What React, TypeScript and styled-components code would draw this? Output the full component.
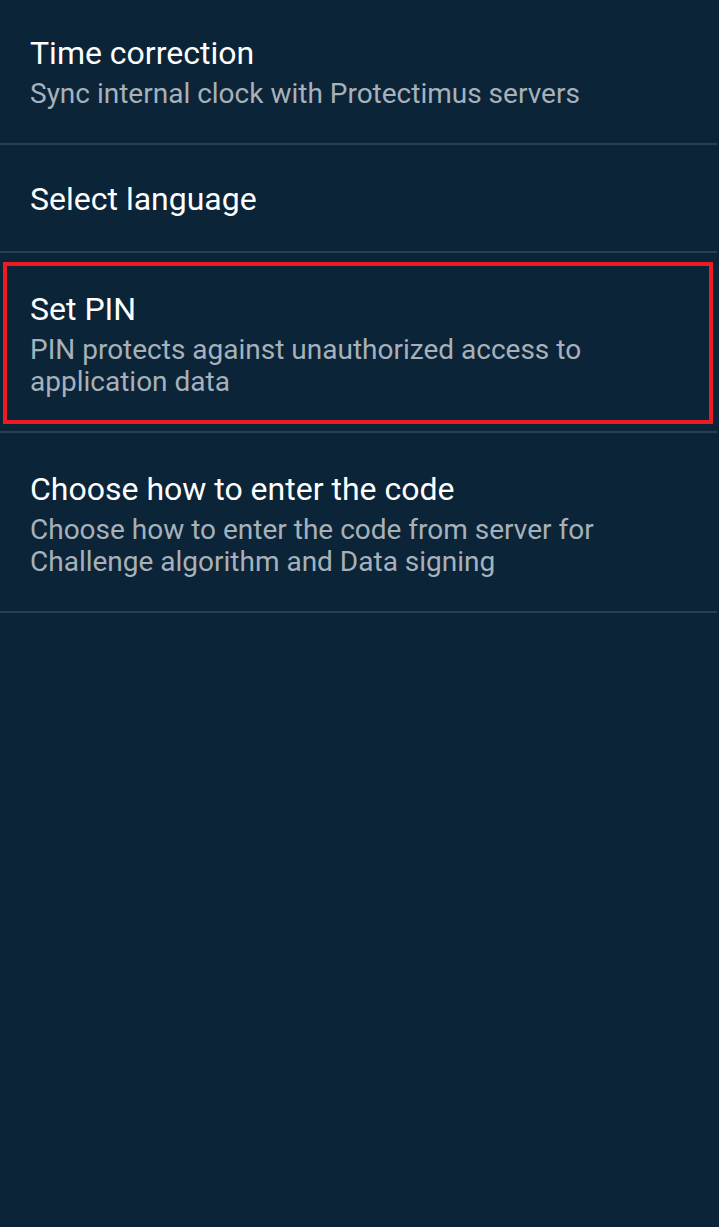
import React from "react";
import styled, { createGlobalStyle } from "styled-components";

const GlobalStyle = createGlobalStyle`
  html, body {
    margin: 0;
    padding: 0;
    background: #0b2438;
  }
  body {
    font-family: Roboto, "Noto Sans", sans-serif;
  }
`;

const Screen = styled.div`
  width: 719px;
  min-height: 1227px;
  background: #0b2438;
  display: flex;
  flex-direction: column;
`;

const Row = styled.div<{ $single?: boolean; $first?: boolean; $highlight?: boolean }>`
  position: relative;
  display: flex;
  flex-direction: column;
  justify-content: ${(p) => (p.$single ? "center" : "flex-start")};
  min-height: ${(p) => (p.$single ? "108px" : "0")};
  padding: ${(p) => (p.$single ? "2px 30px 0" : p.$first ? "35px 30px 33px" : "38px 30px 33px")};
  box-sizing: border-box;
  width: 717px;
  border-bottom: 2px solid #2a3f50;
  ${(p) =>
    p.$highlight &&
    `
    &::after {
      content: "";
      position: absolute;
      left: 3px;
      top: 9px;
      width: 710px;
      height: 162px;
      border: 4px solid #ed1c24;
      box-sizing: border-box;
      pointer-events: none;
    }
  `}
`;

const Title = styled.div`
  color: #ffffff;
  font-size: 32px;
  line-height: 36px;
  font-weight: 400;
`;

const Summary = styled.div`
  color: #a7b1ba;
  font-size: 28px;
  line-height: 32px;
  margin-top: 7px;
`;

type Item = { title: string; summary?: string; highlight?: boolean };

const items: Item[] = [
  { title: "Time correction", summary: "Sync internal clock with Protectimus servers" },
  { title: "Select language" },
  {
    title: "Set PIN",
    summary: "PIN protects against unauthorized access to application data",
    highlight: true,
  },
  {
    title: "Choose how to enter the code",
    summary: "Choose how to enter the code from server for Challenge algorithm and Data signing",
  },
];

export default function App() {
  return (
    <>
      <GlobalStyle />
      <Screen>
        {items.map((it, i) => (
          <Row key={it.title} $single={!it.summary} $first={i === 0} $highlight={it.highlight}>
            <Title>{it.title}</Title>
            {it.summary && <Summary>{it.summary}</Summary>}
          </Row>
        ))}
      </Screen>
    </>
  );
}
